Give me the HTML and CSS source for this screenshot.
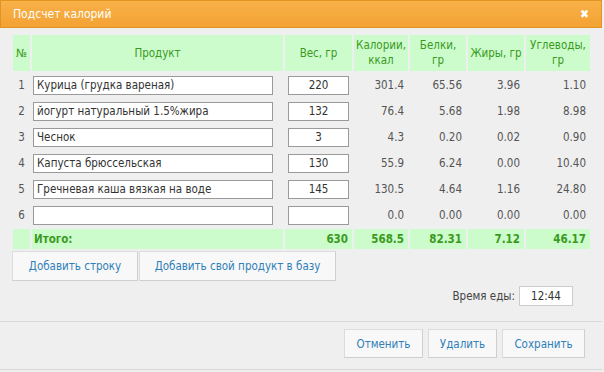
FILE: index.html
```html
<!DOCTYPE html>
<html lang="ru">
<head>
<meta charset="UTF-8">
<title>Подсчет калорий</title>
<link rel="stylesheet" href="styles.css">
</head>
<body>

<div class="dialog">
  <div class="titlebar">
    <span class="title">Подсчет калорий</span>
    <span class="close">&#10006;</span>
  </div>

  <div class="content">
    <table class="calc">
      <colgroup>
        <col class="c-num"><col class="c-name"><col class="c-weight">
        <col class="c-kcal"><col class="c-prot"><col class="c-fat"><col class="c-carb">
      </colgroup>
      <thead>
        <tr>
          <th>№</th>
          <th>Продукт</th>
          <th>Вес, гр</th>
          <th>Калории,<br>ккал</th>
          <th>Белки,<br>гр</th>
          <th>Жиры, гр</th>
          <th>Углеводы,<br>гр</th>
        </tr>
      </thead>
      <tbody>
        <tr>
          <td class="num">1</td>
          <td><input class="name" type="text" value="Курица (грудка вареная)"></td>
          <td><input class="weight" type="text" value="220"></td>
          <td class="val">301.4</td><td class="val">65.56</td><td class="val">3.96</td><td class="val">1.10</td>
        </tr>
        <tr>
          <td class="num">2</td>
          <td><input class="name" type="text" value="йогурт натуральный 1.5%жира"></td>
          <td><input class="weight" type="text" value="132"></td>
          <td class="val">76.4</td><td class="val">5.68</td><td class="val">1.98</td><td class="val">8.98</td>
        </tr>
        <tr>
          <td class="num">3</td>
          <td><input class="name" type="text" value="Чеснок"></td>
          <td><input class="weight" type="text" value="3"></td>
          <td class="val">4.3</td><td class="val">0.20</td><td class="val">0.02</td><td class="val">0.90</td>
        </tr>
        <tr>
          <td class="num">4</td>
          <td><input class="name" type="text" value="Капуста брюссельская"></td>
          <td><input class="weight" type="text" value="130"></td>
          <td class="val">55.9</td><td class="val">6.24</td><td class="val">0.00</td><td class="val">10.40</td>
        </tr>
        <tr>
          <td class="num">5</td>
          <td><input class="name" type="text" value="Гречневая каша вязкая на воде"></td>
          <td><input class="weight" type="text" value="145"></td>
          <td class="val">130.5</td><td class="val">4.64</td><td class="val">1.16</td><td class="val">24.80</td>
        </tr>
        <tr>
          <td class="num">6</td>
          <td><input class="name" type="text" value=""></td>
          <td><input class="weight" type="text" value=""></td>
          <td class="val">0.0</td><td class="val">0.00</td><td class="val">0.00</td><td class="val">0.00</td>
        </tr>
      </tbody>
      <tfoot>
        <tr>
          <td></td>
          <td class="label">Итого:</td>
          <td class="val">630</td>
          <td class="val">568.5</td>
          <td class="val">82.31</td>
          <td class="val">7.12</td>
          <td class="val">46.17</td>
        </tr>
      </tfoot>
    </table>

    <div class="actions">
      <button class="btn add-row">Добавить строку</button>
      <button class="btn add-product">Добавить свой продукт в базу</button>
    </div>

    <div class="meal-time">
      <label for="time">Время еды:</label>
      <input id="time" type="text" value="12:44">
    </div>
  </div>

  <div class="footer">
    <button class="btn cancel">Отменить</button>
    <button class="btn remove">Удалить</button>
    <button class="btn save">Сохранить</button>
  </div>
</div>

</body>
</html>
```

FILE: styles.css
```css
/* Calorie calculator dialog */
body, html {
  margin: 0;
  background-color: #efefef;
}

body {
  font-family: Tahoma, "DejaVu Sans Condensed", "DejaVu Sans", sans-serif;
  font-size: 11.5px;
  color: #444444;
}

.dialog {
  width: 602px;
  height: 370px;
  background-color: #efefef;
  border-bottom: 1px solid #d6d6d6;
  box-sizing: border-box;
}

.titlebar {
  height: 28px;
  display: flex;
  align-items: center;
  justify-content: space-between;
  padding: 0 12px;
  background: linear-gradient(#f8b148, #f4a234);
  border: 1px solid #e39322;
  box-sizing: border-box;
  color: #ffffff;
}

.title {
  font-size: 12px;
}

.close {
  font-size: 12px;
  font-weight: bold;
}

.content {
  padding: 5px 0 0 11px;
}

.calc {
  width: 581px;
  border-collapse: separate;
  border-spacing: 2px;
  table-layout: fixed;
}

.c-num { width: 17px; }
.c-name { width: 251px; }
.c-weight { width: 67px; }
.c-kcal { width: 54px; }
.c-prot { width: 56px; }
.c-fat { width: 56px; }
.c-carb { width: 64px; }

.calc th {
  height: 36px;
  padding: 0;
  background-color: #ccfccc;
  color: #3a9a1c;
  font-weight: normal;
  line-height: 15px;
}

.calc tbody td {
  height: 24px;
  padding: 0;
}

.calc td.num {
  text-align: center;
  color: #555555;
}

.calc td.val {
  text-align: right;
  padding-right: 4px;
  color: #555555;
}

.calc input {
  height: 19px;
  box-sizing: border-box;
  border: 1px solid #9a9a9a;
  background-color: #ffffff;
  font-family: inherit;
  font-size: 11.5px;
  color: #333333;
  padding: 0 3px;
  margin: 0;
}

.calc input.name {
  width: 240px;
  margin-left: 1px;
}

.calc input.weight {
  width: 61px;
  margin-left: 3px;
  text-align: center;
}

.calc tfoot td {
  height: 20px;
  padding: 0;
  background-color: #ccfccc;
  color: #3a9a1c;
  font-weight: bold;
}

.calc tfoot td.label {
  padding-left: 2px;
}

.calc tfoot td.val {
  color: #3a9a1c;
}

.actions {
  display: flex;
  gap: 1px;
  padding-left: 1px;
}

.btn {
  height: 30px;
  padding: 0;
  background-color: #f8f8f8;
  border: 1px solid #dcdcdc;
  border-right-color: #cfcfcf;
  border-bottom-color: #cfcfcf;
  font-family: inherit;
  font-size: 11.5px;
  color: #2f80b9;
  white-space: nowrap;
  cursor: pointer;
}

.add-row { width: 126px; }
.add-product { width: 197px; }

.meal-time {
  display: flex;
  justify-content: flex-end;
  align-items: center;
  gap: 4px;
  margin-top: 5px;
  padding-right: 29px;
}

.meal-time label {
  color: #444444;
}

.meal-time input {
  width: 54px;
  height: 20px;
  box-sizing: border-box;
  border: 1px solid #cccccc;
  background-color: #ffffff;
  font-family: inherit;
  font-size: 11.5px;
  text-align: center;
  color: #333333;
}

.footer {
  margin-top: 15px;
  border-top: 1px solid #dadada;
  display: flex;
  justify-content: flex-end;
  gap: 5px;
  padding: 7px 17px 0 0;
}

.footer .btn {
  height: 29px;
}

.cancel { width: 79px; }
.remove { width: 69px; }
.save { width: 83px; }
```
